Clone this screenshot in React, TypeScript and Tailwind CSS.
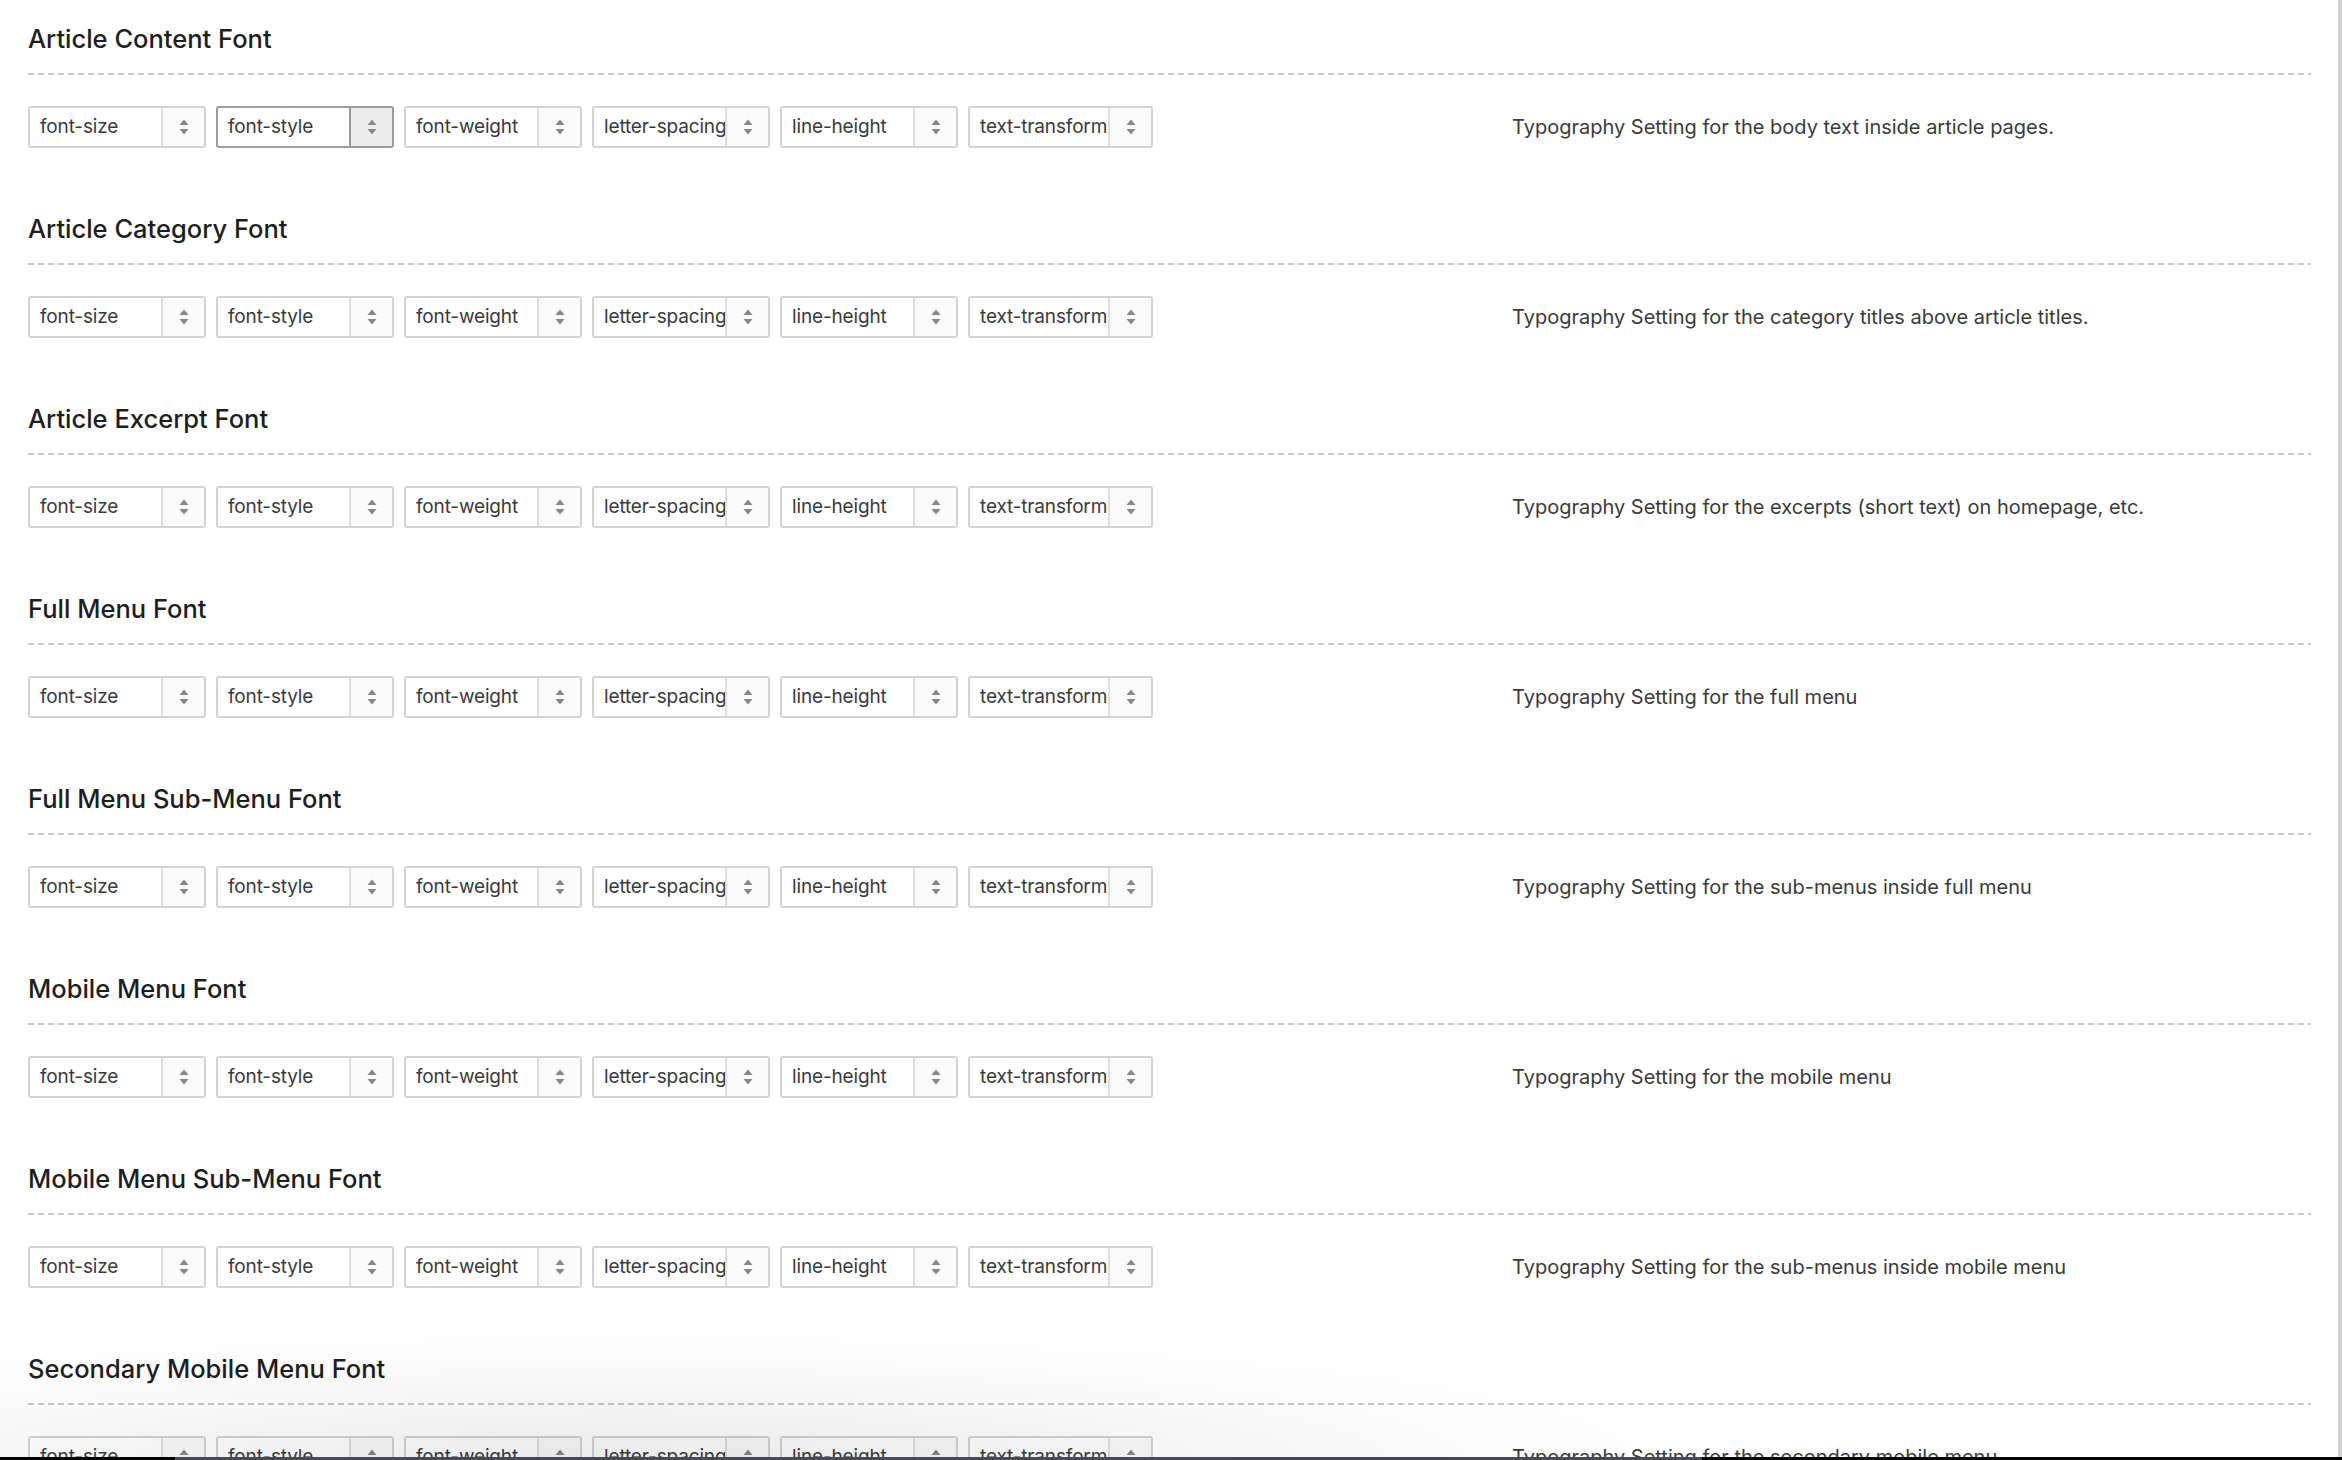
import React from "react";

const sections = [
  { title: "Article Content Font", desc: "Typography Setting for the body text inside article pages.", active: true },
  { title: "Article Category Font", desc: "Typography Setting for the category titles above article titles." },
  { title: "Article Excerpt Font", desc: "Typography Setting for the excerpts (short text) on homepage, etc." },
  { title: "Full Menu Font", desc: "Typography Setting for the full menu" },
  { title: "Full Menu Sub-Menu Font", desc: "Typography Setting for the sub-menus inside full menu" },
  { title: "Mobile Menu Font", desc: "Typography Setting for the mobile menu" },
  { title: "Mobile Menu Sub-Menu Font", desc: "Typography Setting for the sub-menus inside mobile menu" },
  { title: "Secondary Mobile Menu Font", desc: "Typography Setting for the secondary mobile menu" },
];

const fields = ["font-size", "font-style", "font-weight", "letter-spacing", "line-height", "text-transform"];
const widths = ["w-[178px]", "w-[178px]", "w-[178px]", "w-[178px]", "w-[178px]", "w-[185px]"];

function Arrows() {
  return (
    <svg width="10" height="16" viewBox="0 0 10 16" className="block">
      <path d="M0.5 6 L5 0.5 L9.5 6 Z" fill="#878787" />
      <path d="M0.5 10 L5 15.5 L9.5 10 Z" fill="#878787" />
    </svg>
  );
}

function SelectBox({ label, active, w }: { label: string; active?: boolean; w: string }) {
  return (
    <div
      className={
        "flex h-[42px] rounded-[3px] border-2 bg-white " +
        w +
        " " +
        (active ? "border-[#9b9b9b]" : "border-[#d3d3d3]")
      }
    >
      <div className="flex min-w-0 flex-1 items-center pl-[10px] text-[19px] text-[#3a3a3a] whitespace-nowrap tracking-[-0.15px]">
        {label}
      </div>
      <div
        className={
          "flex w-[43px] shrink-0 items-center justify-center border-l-2 " +
          (active ? "border-[#9b9b9b] bg-[#ececec]" : "border-[#dedede] bg-[#fafafa]")
        }
      >
        <Arrows />
      </div>
    </div>
  );
}

function Section({ title, desc, active }: { title: string; desc: string; active?: boolean }) {
  return (
    <div className="flex flex-col pt-[20px] pb-[43px]">
      <div className="h-[36px] text-[25.5px] leading-[36px] font-medium text-[#1e1e1e]">{title}</div>
      <div className="mt-[16px] h-[2px] w-full bg-[repeating-linear-gradient(to_right,#c9c9c9_0px,#c9c9c9_6px,transparent_6px,transparent_10px)]" />
      <div className="mt-[31px] flex items-center">
        <div className="flex gap-[10px]">
          {fields.map((f, i) => (
            <SelectBox key={f} label={f} active={active && i === 1} w={widths[i]} />
          ))}
        </div>
        <div className="ml-[359px] text-[20px] text-[#3a3a3a] whitespace-nowrap">{desc}</div>
      </div>
    </div>
  );
}

export default function App() {
  return (
    <div
      className="relative flex h-[1460px] w-[2342px] overflow-hidden bg-white"
      style={{ fontFamily: "Inter, Roboto, 'Liberation Sans', sans-serif" }}
    >
      <div className="flex-1 pt-[1px] pl-[28px] pr-[27px]">
        {sections.map((s) => (
          <Section key={s.title} {...s} />
        ))}
      </div>
      <div className="w-[4px] shrink-0 bg-[#d2d2d2]" />
      <div className="pointer-events-none absolute bottom-0 left-0 h-[130px] w-[1800px] bg-[radial-gradient(ellipse_60%_100%_at_35%_100%,rgba(0,0,0,0.08),rgba(0,0,0,0)_100%)]" />
      <div className="pointer-events-none absolute bottom-0 left-0 right-0 flex h-[3px]">
        <div className="w-[175px] bg-black" />
        <div className="w-[1527px] bg-[#474a52]" />
        <div className="flex-1 bg-black" />
      </div>
    </div>
  );
}
